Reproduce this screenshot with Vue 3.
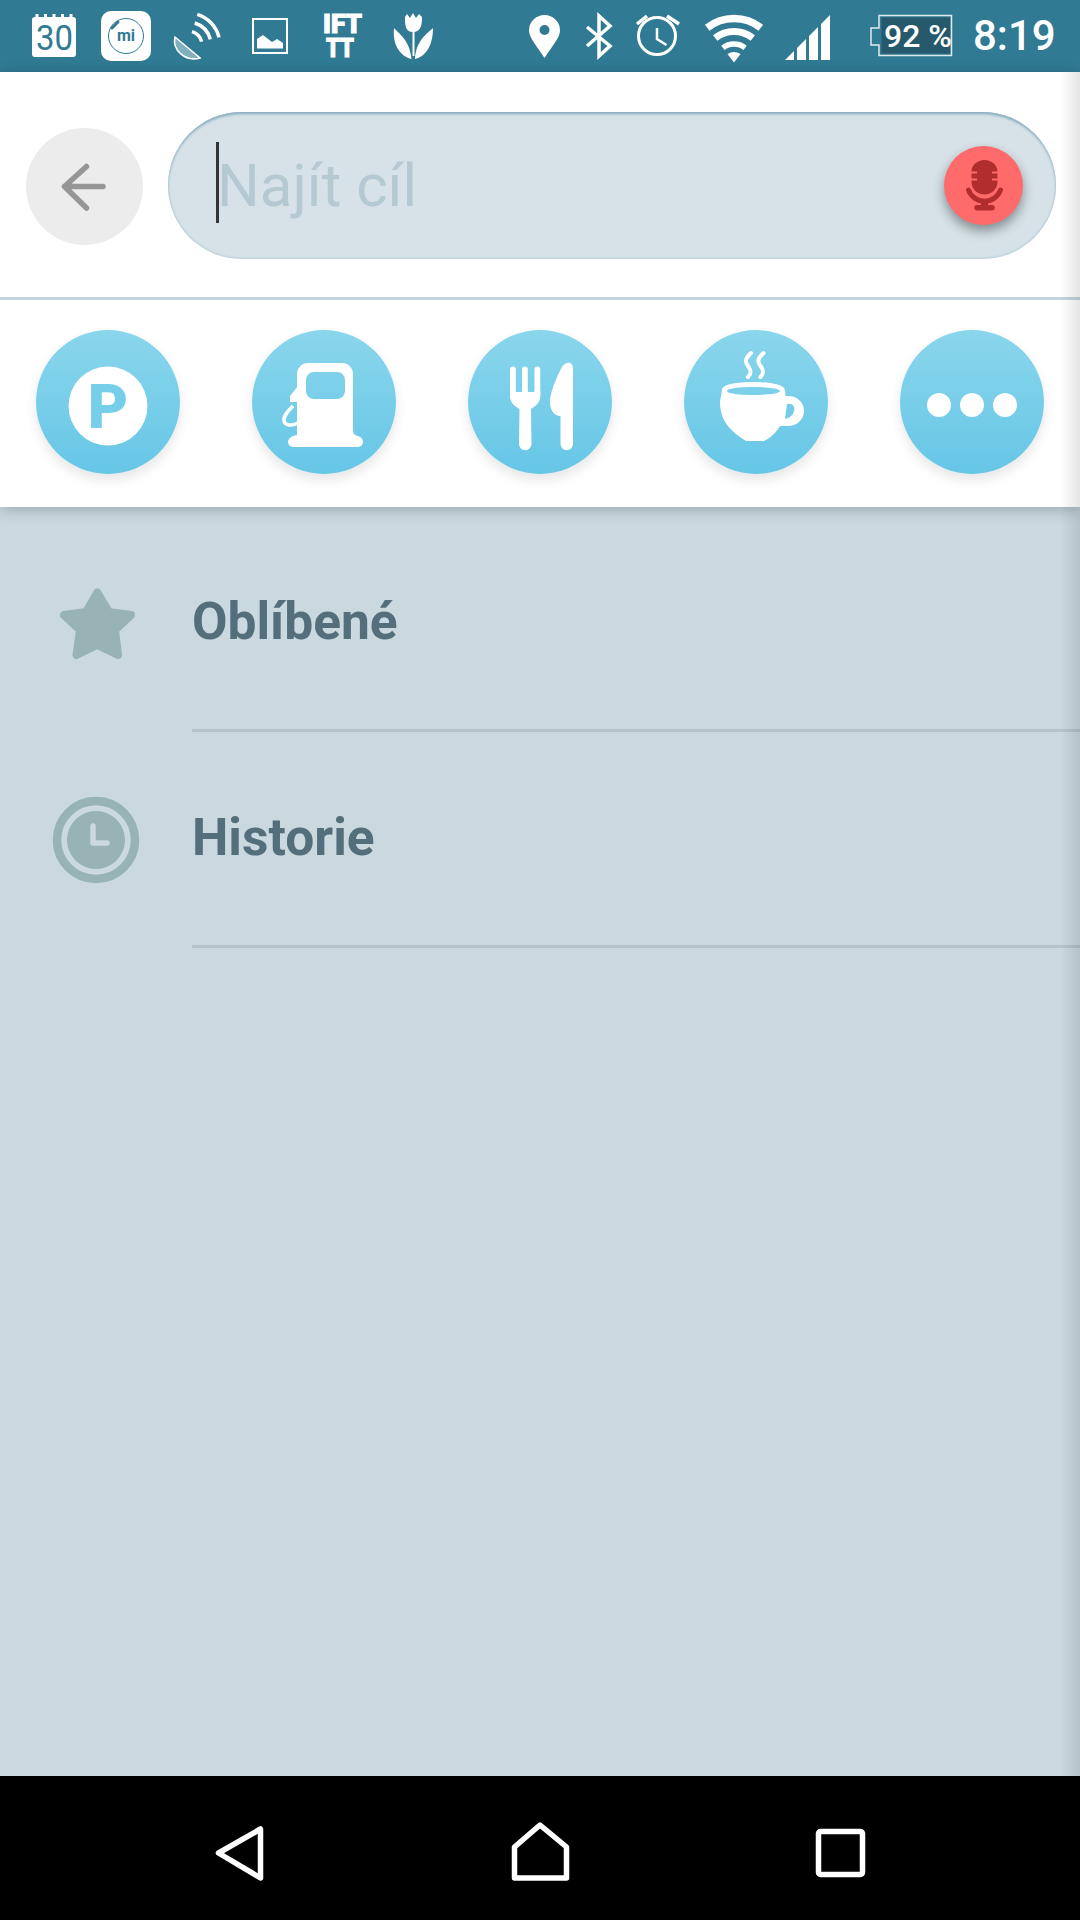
<template>
  <div class="screen">
    <div class="status-bar">
      <svg width="88" height="72" viewBox="0 0 88 72">
        <rect x="32" y="17" width="44" height="40" rx="3" fill="#fff" />
        <rect v-for="x in [35.5, 44, 52.5, 61, 69.5]" :key="x" :x="x" y="14" width="3" height="5" fill="#fff" />
        <text class="cal-num" x="36" y="50" textLength="37" lengthAdjust="spacingAndGlyphs">30</text>
      </svg>
      <svg width="74" height="72" viewBox="88 0 74 72">
        <rect x="101" y="11" width="50" height="50" rx="10" fill="#fff" />
        <circle cx="126" cy="36" r="17.5" fill="none" stroke="#307a93" stroke-width="1" />
        <path d="M112 28 L118 22" stroke="#307a93" stroke-width="3" stroke-linecap="round" />
        <text class="mi-text" x="126" y="41" text-anchor="middle">mi</text>
      </svg>
      <svg width="75" height="72" viewBox="162 0 75 72">
        <g fill="none" stroke="#fff" stroke-width="3.5">
          <path d="M197.3 14.4 A32 32 0 0 1 219 37.3" />
          <path d="M194.7 23 A23 23 0 0 1 210.3 39.4" />
          <path d="M192 31.6 A14 14 0 0 1 201.6 41.6" />
        </g>
        <path d="M175 37 C172 50 185 62 200 58 Z" fill="#fff" fill-opacity="0.4" stroke="#fff" stroke-width="1.5" />
      </svg>
      <svg width="68" height="72" viewBox="237 0 68 72">
        <rect x="253" y="19" width="34" height="34" fill="none" stroke="#fff" stroke-width="2" />
        <path d="M257 48.5 V39 L263 35 L272 42 L277 39 L283 43 V48.5 Z" fill="#fff" />
      </svg>
      <svg width="73" height="72" viewBox="305 0 73 72">
        <text class="ifttt"><tspan x="323" y="33" textLength="39" lengthAdjust="spacingAndGlyphs">IFT</tspan><tspan x="326" y="57" textLength="28" lengthAdjust="spacingAndGlyphs">TT</tspan></text>
      </svg>
      <svg width="122" height="72" viewBox="378 0 122 72">
        <path d="M405 17 C405 25 405 32 413 32 C421 32 422 25 422 17 L419 14 L416 18 L413 13 L410 18 L407 14 Z" fill="#fff" />
        <path d="M394 28 C398 33 410 40 411.5 59 C403 57 392 48 394 28 Z" fill="#fff" />
        <path d="M433 28 C433 48 424 57 415 59 C416 40 428 33 433 28 Z" fill="#fff" />
        <path d="M413.5 30 V56" stroke="#fff" stroke-width="2" />
      </svg>
      <svg width="72" height="72" viewBox="500 0 72 72">
        <path fill-rule="evenodd" fill="#fff" d="M544.5 58 C537 46 529 38 529 30.5 A15.5 15.5 0 0 1 560 30.5 C560 38 552 46 544.5 58 Z M544.5 25 A5 5 0 1 0 544.5 35 A5 5 0 1 0 544.5 25 Z" />
      </svg>
      <svg width="52" height="72" viewBox="572 0 52 72">
        <path d="M587 27 L610 46 L599 56 V16 L610 26 L587 46" fill="none" stroke="#fff" stroke-width="3.5" />
      </svg>
      <svg width="67" height="72" viewBox="624 0 67 72">
        <circle cx="657" cy="36" r="18.5" fill="none" stroke="#fff" stroke-width="3" />
        <path d="M637 24 L647 16 M679 24 L667 16" stroke="#fff" stroke-width="3.5" />
        <path d="M657 28 V39 L666.5 45" fill="none" stroke="#fff" stroke-width="2.5" />
      </svg>
      <svg width="83" height="72" viewBox="691 0 83 72">
        <g fill="none" stroke="#fff">
          <path d="M707.2 27.7 A43.5 43.5 0 0 1 760.8 27.7" stroke-width="7.5" />
          <path d="M715.2 38 A30.5 30.5 0 0 1 752.8 38" stroke-width="7" />
          <path d="M722.9 47.8 A18 18 0 0 1 745.1 47.8" stroke-width="5.5" />
        </g>
        <path d="M734 62.5 L727.5 54 Q734 50 740.5 54 Z" fill="#fff" />
      </svg>
      <svg width="76" height="72" viewBox="774 0 76 72">
        <path d="M785 60 L794 51 V60 Z M797 60 V48 L806 39 V60 Z M809 60 V36 L818 27 V60 Z M821 60 V24 L830 15 V60 Z" fill="#fff" />
      </svg>
      <svg width="115" height="72" viewBox="850 0 115 72">
        <path d="M879 15.5 H951.5 V55.5 H879 V45 H871 V28 H879 Z" fill="none" stroke="#dfeaee" stroke-width="1.5" />
        <rect x="881.5" y="17.5" width="68.5" height="36" fill="#25596b" />
        <text class="battery-text" x="884" y="47">92 %</text>
      </svg>
      <span class="clock">8:19</span>
    </div>

    <div class="top-panel">
      <div class="search-row">
        <button class="back-btn">
          <svg width="117" height="117" viewBox="0 0 117 117">
            <path d="M60.5 38.5 L38.5 58.5 L60.5 80 M38.5 58.5 H77" fill="none" stroke="#969696" stroke-width="5.5" stroke-linecap="round" stroke-linejoin="round" />
          </svg>
        </button>
        <div class="search-box">
          <span class="caret"></span>
          <span class="placeholder">Najít cíl</span>
          <button class="mic-btn">
            <svg width="79" height="79" viewBox="0 0 79 79">
              <path d="M40.5 14 C47.5 14 53.5 19 53.5 25.5 H48 V27.5 H53.5 V32.5 H48 V34.5 H53.5 V36 C53.5 43 47.5 48.5 40.5 48.5 C33.5 48.5 27.5 43 27.5 36 V34.5 H33 V32.5 H27.5 V27.5 H33 V25.5 H27.5 C27.5 19 33.5 14 40.5 14 Z" fill="#b22d2d" />
              <path d="M24.5 44 A17 17 0 0 0 56.5 44" fill="none" stroke="#b22d2d" stroke-width="5" stroke-linecap="round" />
              <path d="M37 54 H44 V59 H48 A2.5 2.5 0 0 1 48 64.5 H33 A2.5 2.5 0 0 1 33 59 H37 Z" fill="#b22d2d" />
            </svg>
          </button>
        </div>
      </div>

      <div class="categories">
        <button class="category">
          <svg width="144" height="144" viewBox="0 0 144 144">
            <circle cx="72" cy="76" r="39.5" fill="#fff" />
            <text class="parking" x="72" y="98" text-anchor="middle">P</text>
          </svg>
        </button>
        <button class="category">
          <svg width="144" height="144" viewBox="0 0 144 144">
            <path fill="#fff" fill-rule="evenodd" d="M45 44 A11 11 0 0 1 56 33 H90 A11 11 0 0 1 101 44 V100 C101 104 103 105 106 106 C109 107 111 109 111 112 A5 5 0 0 1 106 117 H41 A5 5 0 0 1 36 112 C36 109 39 106 45 105 Z M62 42 A8 8 0 0 0 54 50 V61 A8 8 0 0 0 62 69 H85 A8 8 0 0 0 93 61 V50 A8 8 0 0 0 85 42 Z" />
            <path d="M46 56 L38 66 V72 H46 Z" fill="#fff" />
            <path d="M41 76 C36 81 31 86 32 91 C33 96 40 96 46 93" fill="none" stroke="#fff" stroke-width="3.5" />
          </svg>
        </button>
        <button class="category">
          <svg width="144" height="144" viewBox="0 0 144 144">
            <g fill="#fff">
              <rect x="42" y="36.5" width="5.8" height="32" rx="2.9" />
              <rect x="54" y="36.5" width="5.8" height="32" rx="2.9" />
              <rect x="66.5" y="36.5" width="5.8" height="32" rx="2.9" />
              <path d="M42 60 H45 V62 H54 V60 H59.8 V62 H66.5 V60 H72.3 V66 C72.3 72 68 76 63 79 L63.5 114 A6.2 6.2 0 0 1 51 114 L51.5 79 C46 76 42 72 42 66 Z" />
              <path d="M105 39 V114 A6.2 6.2 0 0 1 92.5 114 V86 C86 86 82 80 82 72 C82 62 90 44 94 37 C97 32 105 30 105 39 Z" />
            </g>
          </svg>
        </button>
        <button class="category">
          <svg width="144" height="144" viewBox="0 0 144 144">
            <path fill="#fff" fill-rule="evenodd" d="M38 60 C38 54 54 52 69 52 C84 52 100 54 101 60 L101.5 66 H104 C113 66 120 72 120 81 C120 90 112 96 104 96 H96 C92 103 86 108 80 111 H62 C48 102 36 92 36 72 Z M69 57 C55 57 43 58.5 43 61 C43 63.5 55 65 69 65 C83 65 96 63.5 96 61 C96 58.5 83 57 69 57 Z M103 74 H106 C110 74 111 78 110 81 C109 85 106 88 101 89 Z" />
            <path d="M67 23 C62 28 60 31 64 36 C68 41 67 44 64 47 M79.5 23 C74.5 28 72.5 31 76.5 36 C80.5 41 79.5 44 76.5 47" fill="none" stroke="#fff" stroke-width="4" stroke-linecap="round" />
          </svg>
        </button>
        <button class="category">
          <svg width="144" height="144" viewBox="0 0 144 144">
            <circle cx="39" cy="75" r="12" fill="#fff" />
            <circle cx="72" cy="75" r="12" fill="#fff" />
            <circle cx="105" cy="75" r="12" fill="#fff" />
          </svg>
        </button>
      </div>
    </div>

    <div class="list">
      <div class="list-row">
        <svg class="row-icon" width="192" height="100" viewBox="0 0 192 100">
          <path d="M97.3 18.5 L109 38 L131 41 L115 56 L118 81 L97.3 71 L76.5 81 L80 56 L64 41 L86 38 Z" fill="#98b3b5" stroke="#98b3b5" stroke-width="8" stroke-linejoin="round" />
        </svg>
        <span class="row-label">Oblíbené</span>
      </div>
      <div class="list-row">
        <svg class="row-icon" width="192" height="100" viewBox="0 0 192 100">
          <circle cx="96" cy="50" r="39" fill="none" stroke="#98b3b5" stroke-width="8.5" />
          <circle cx="96" cy="50" r="29" fill="#98b3b5" />
          <path d="M93 36 V53 H107" fill="none" stroke="#cad8e0" stroke-width="5.5" stroke-linecap="round" stroke-linejoin="round" />
        </svg>
        <span class="row-label">Historie</span>
      </div>
    </div>

    <div class="nav-bar">
      <div class="nav-cell">
        <svg width="60" height="144" viewBox="210 1776 60 144">
          <path d="M218.5 1853 L260.5 1829 V1878 Z" fill="none" stroke="#fff" stroke-width="5.5" stroke-linejoin="round" />
        </svg>
      </div>
      <div class="nav-cell">
        <svg width="60" height="144" viewBox="510 1776 60 144">
          <path d="M514.5 1878 V1847 L540 1825 L566.5 1847 V1878 Z" fill="none" stroke="#fff" stroke-width="5.5" stroke-linejoin="round" />
        </svg>
      </div>
      <div class="nav-cell">
        <svg width="60" height="144" viewBox="810 1776 60 144">
          <rect x="818.5" y="1831.5" width="44" height="43" rx="2" fill="none" stroke="#fff" stroke-width="5.5" />
        </svg>
      </div>
    </div>

    <div class="edge-shadow"></div>
  </div>
</template>

<script setup>
</script>

<style scoped>
.screen {
  position: relative;
  width: 1080px;
  height: 1920px;
  display: flex;
  flex-direction: column;
  overflow: hidden;
  background: #cad8e0;
  font-family: Roboto, sans-serif;
}

button {
  padding: 0;
  border: none;
  cursor: pointer;
}

svg {
  display: block;
  flex-shrink: 0;
}

.status-bar {
  display: flex;
  height: 72px;
  background: #307a93;
}

.cal-num {
  font-family: Roboto, sans-serif;
  font-size: 35px;
  font-weight: 400;
  fill: #307a93;
}

.mi-text {
  font-family: Roboto, sans-serif;
  font-size: 16px;
  font-weight: 700;
  fill: #307a93;
}

.ifttt {
  font-family: Roboto, sans-serif;
  font-size: 25px;
  font-weight: 900;
  fill: #fff;
  stroke: #fff;
  stroke-width: 1px;
}

.battery-text {
  font-family: Roboto, sans-serif;
  font-size: 32px;
  font-weight: 500;
  fill: #fff;
}

.clock {
  padding-left: 8px;
  font-size: 42px;
  font-weight: 500;
  line-height: 72px;
  color: #fff;
}

.top-panel {
  position: relative;
  z-index: 1;
  background: #fff;
  box-shadow: 0 3px 14px rgba(0, 0, 0, 0.22);
}

.search-row {
  box-sizing: border-box;
  display: flex;
  align-items: center;
  gap: 25px;
  height: 228px;
  padding: 2px 24px 0 26px;
  border-bottom: 3px solid #c2d5dc;
}

.back-btn {
  width: 117px;
  height: 117px;
  margin-top: 2px;
  border-radius: 50%;
  background: #ececec;
}

.search-box {
  flex: 1;
  display: flex;
  align-items: center;
  height: 147px;
  padding: 0 33px 0 48px;
  border-radius: 74px;
  background: #d6e2e7;
  box-shadow: inset 0 3px 3px -1px #86adbf, inset 0 0 3px #9dbccb;
}

.caret {
  width: 3px;
  height: 81px;
  margin-top: -7px;
  background: #333;
}

.placeholder {
  flex: 1;
  margin-left: -2px;
  font-size: 60px;
  color: #b4c9d2;
}

.mic-btn {
  width: 79px;
  height: 79px;
  border-radius: 50%;
  background: #ff6b6b;
  box-shadow: 0 6px 12px rgba(0, 0, 0, 0.38);
}

.categories {
  display: flex;
  justify-content: space-between;
  padding: 30px 36px 33px;
}

.category {
  width: 144px;
  height: 144px;
  border-radius: 50%;
  background: linear-gradient(180deg, #8ad6ec, #66c6e6);
  box-shadow: 0 6px 12px rgba(0, 0, 0, 0.1);
}

.parking {
  font-family: Roboto, sans-serif;
  font-size: 62px;
  font-weight: 900;
  fill: #76cee9;
}

.list {
  flex: 1;
  padding-top: 9px;
}

.list-row {
  display: flex;
  align-items: center;
  height: 216px;
  position: relative;
}

.list-row::after {
  content: "";
  position: absolute;
  left: 192px;
  right: 0;
  bottom: 0;
  height: 3px;
  background: #b4c4ca;
}

.row-label {
  margin-top: -6px;
  font-size: 51.5px;
  font-weight: 700;
  color: #546f7b;
}

.nav-bar {
  display: flex;
  justify-content: center;
  height: 144px;
  background: #000;
}

.nav-cell {
  display: flex;
  justify-content: center;
  width: 300px;
}

.edge-shadow {
  position: absolute;
  z-index: 2;
  top: 72px;
  right: 0;
  bottom: 144px;
  width: 20px;
  background: linear-gradient(90deg, rgba(0, 0, 0, 0), rgba(0, 0, 0, 0.1));
}
</style>
